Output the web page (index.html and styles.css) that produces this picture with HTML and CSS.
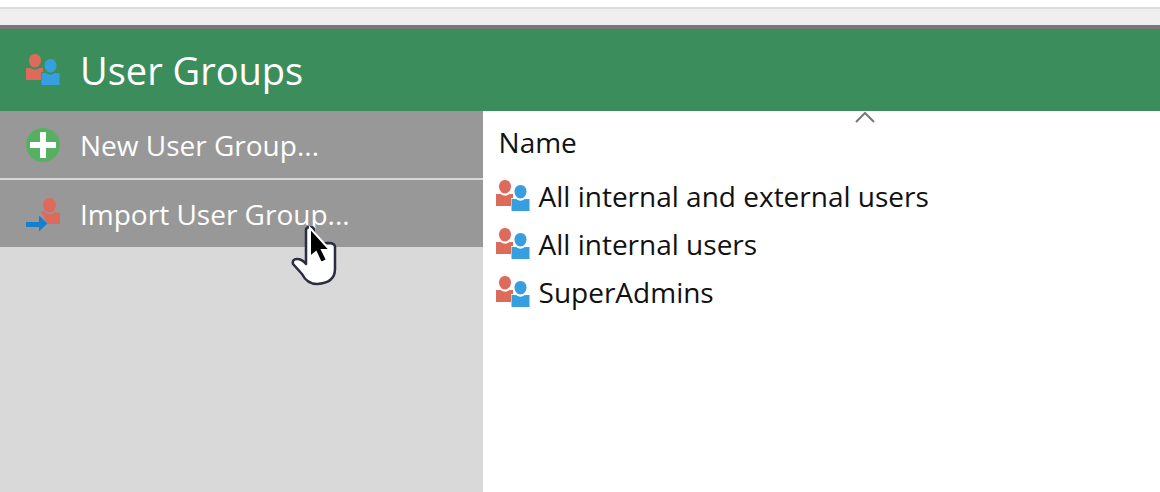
FILE: index.html
```html
<!DOCTYPE html>
<html lang="en">

<head>
    <meta charset="UTF-8" />
    <meta name="viewport" content="width=device-width, initial-scale=1.0" />
    <title>User Groups</title>
    <link rel="stylesheet" href="styles.css">
</head>

<body>

    <!-- shared icon -->
    <svg class="sprite" aria-hidden="true">
        <symbol id="users" viewBox="0 0 34 32">
            <path fill="#de6a5b" d="M9 0c4 0 6 3 6 6.500S12.500 13.500 9 13.500 3 10 3 6.500 5 0 9 0zM0 14h4.500Q9 17.500 13.500 14H17v4h-2v8H0z" />
            <path fill="#379fe0" d="M24.500 5c4 0 6 3 6 6.500s-2.500 7-6 7-6-3.500-6-7S20.500 5 24.500 5zM15.500 19H20q4.500 3.500 9 0h4.500v12h-18z" />
        </symbol>
    </svg>

    <div class="topbar"></div>

    <header class="header">
        <svg class="icon"><use href="#users" /></svg>
        <h1>User Groups</h1>
    </header>

    <div class="content">
        <nav class="sidebar">
            <button type="button" class="action">
                <svg class="icon" viewBox="0 0 34 34">
                    <circle cx="17" cy="17" r="17" fill="#57b062" />
                    <path d="M17 4v26M4 17h26" stroke="#fff" stroke-width="6" />
                </svg>
                New User Group...
            </button>
            <button type="button" class="action">
                <svg class="icon" viewBox="0 0 34 34">
                    <path fill="#de6a5b" d="M23.500 1c4 0 6.500 3 6.500 7s-3 7.500-6.500 7.500S17 12 17 8s2.500-7 6.500-7zM15 15l3-1q5.500 6 11 1l5 1v11H22z" />
                    <path fill="#1680cf" d="M0 25h13v-6.500l8.500 8-8.500 8V30H0z" />
                </svg>
                Import User Group...
                <svg class="cursor" viewBox="0 0 46 60">
                    <path fill="#fff" stroke="#2b2d42" stroke-width="2.500" stroke-linejoin="round" d="M15 32V4q0-3 4-3t4 3v14l14-1q7 0 7 4v22q0 14-18 15-10 0-15-10L2 38q-1-5 4-5 5 0 9 5z" />
                    <path fill="#000" stroke="#fff" stroke-width="2" d="M19 2v29l6-5 5 11 6-3-5-10h8z" />
                </svg>
            </button>
        </nav>

        <main class="list">
            <table>
                <thead>
                    <tr>
                        <th scope="col" aria-sort="ascending">
                            Name
                            <svg class="sort" viewBox="0 0 20 12">
                                <path d="M1 11l9-9 9 9" fill="none" stroke="#777" stroke-width="2" />
                            </svg>
                        </th>
                    </tr>
                </thead>
                <tbody>
                    <tr>
                        <td><div class="group"><svg class="icon"><use href="#users" /></svg>All internal and external users</div></td>
                    </tr>
                    <tr>
                        <td><div class="group"><svg class="icon"><use href="#users" /></svg>All internal users</div></td>
                    </tr>
                    <tr>
                        <td><div class="group"><svg class="icon"><use href="#users" /></svg>SuperAdmins</div></td>
                    </tr>
                </tbody>
            </table>
        </main>
    </div>

</body>

</html>
```
FILE: styles.css
```css
* {
    box-sizing: border-box;
}

body {
    font-family: 'Open Sans', sans-serif;
    font-size: 28px;
    line-height: 36px;
    background-color: #fff;
    color: #111;
    margin: 0;
    padding-top: 7px;
    display: flex;
    flex-direction: column;
    min-height: 100vh;
}

.sprite {
    display: none;
}

.icon {
    width: 34px;
    height: 34px;
    flex-shrink: 0;
}

.topbar {
    height: 22px;
    background-color: #efefef;
    border-top: 2px solid #dcdcdc;
    border-bottom: 4px solid #777;
}

.header {
    display: flex;
    align-items: center;
    gap: 20px;
    height: 82px;
    padding: 0 26px;
    background-color: #3b8e5c;
    color: #fff;
}

h1 {
    margin: 0;
    font-size: 38px;
    line-height: 48px;
    font-weight: 400;
}

.content {
    display: flex;
    flex: 1;
}

.sidebar {
    display: flex;
    flex-direction: column;
    gap: 2px;
    width: 41.6%;
    background-color: #d9d9d9;
}

.action {
    position: relative;
    display: flex;
    align-items: center;
    gap: 20px;
    height: 67px;
    padding: 0 26px;
    border: none;
    background-color: #989898;
    color: #fff;
    font: inherit;
    text-align: left;
    cursor: pointer;
}

.cursor {
    position: absolute;
    top: 46px;
    left: 291px;
    width: 46px;
    height: 60px;
}

.list {
    flex: 1;
    overflow: hidden;
}

/* the name column runs past the right edge */
table {
    width: 113%;
    border-collapse: collapse;
}

th {
    position: relative;
    height: 61px;
    padding: 0 16px;
    font-weight: 400;
    text-align: left;
}

.sort {
    position: absolute;
    top: 0;
    left: 50%;
    width: 20px;
    height: 12px;
    margin-left: -10px;
}

td {
    height: 48px;
    padding: 0 13px;
}

.group {
    display: flex;
    align-items: center;
    gap: 9px;
}
```
